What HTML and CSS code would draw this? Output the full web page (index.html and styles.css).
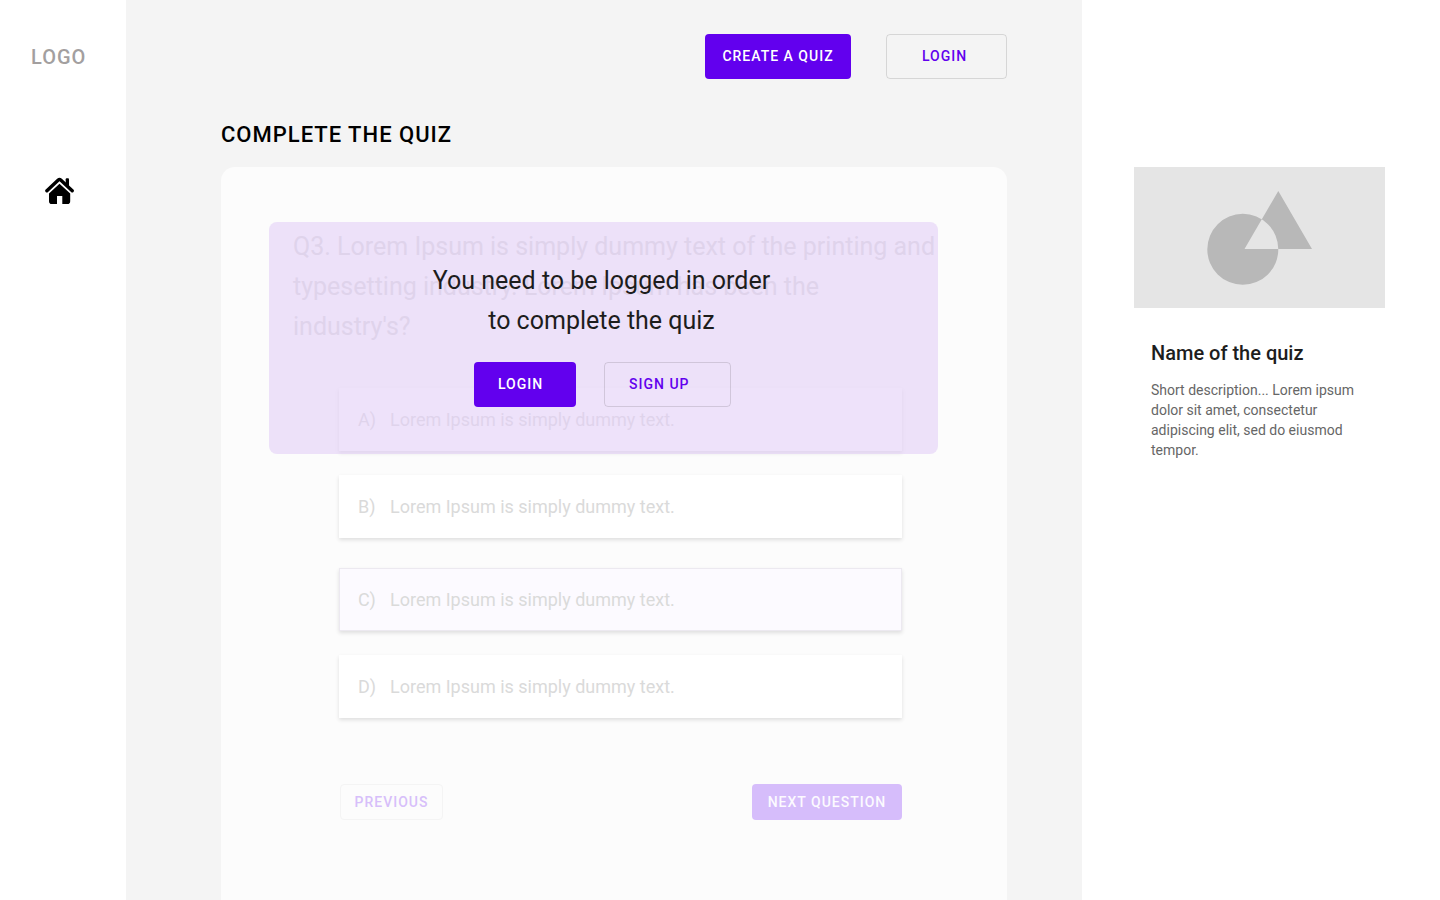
FILE: index.html
```html
<!DOCTYPE html>
<html lang="en">
<head>
<meta charset="utf-8">
<meta name="viewport" content="width=device-width, initial-scale=1">
<title>Complete the quiz</title>
<link rel="stylesheet" href="styles.css">
</head>
<body>
<div class="layout">
  <nav class="sidebar" aria-label="Main">
    <div class="logo">LOGO</div>
    <a class="home-link" href="#" aria-label="Home">
      <svg class="home-icon" viewBox="0 0 30 28" aria-hidden="true">
        <path d="M20.700 2.200Q20.700 1.200 21.700 1.200H23Q24 1.200 24 2.200V10L20.700 7Z"/>
        <path d="M1.900 13.800 13.300 3Q14.500 1.900 15.700 3L27.200 13.800" fill="none" stroke="#000" stroke-width="3.400" stroke-linecap="round"/>
        <path d="M14.500 6.800 25.200 16.600V24.200Q25.200 27 22.400 27H17.300V19H12V27H6.800Q4 27 4 24.200V16.600Z"/>
      </svg>
    </a>
  </nav>

  <main class="main">
    <header class="topbar">
      <button class="btn btn-filled btn-create" type="button">CREATE A QUIZ</button>
      <button class="btn btn-outline btn-login" type="button">LOGIN</button>
    </header>
    <h1 class="page-title">COMPLETE THE QUIZ</h1>

    <section class="card">
      <div class="quiz">
        <p class="question">Q3. Lorem Ipsum is simply dummy text of the printing and typesetting industry. Lorem Ipsum has been the industry's?</p>
        <div class="options">
          <button class="option" type="button"><span class="letter">A)</span><span>Lorem Ipsum is simply dummy text.</span></button>
          <button class="option" type="button"><span class="letter">B)</span><span>Lorem Ipsum is simply dummy text.</span></button>
          <button class="option option-selected" type="button" aria-pressed="true"><span class="letter">C)</span><span>Lorem Ipsum is simply dummy text.</span></button>
          <button class="option" type="button"><span class="letter">D)</span><span>Lorem Ipsum is simply dummy text.</span></button>
        </div>
        <div class="pager">
          <button class="btn btn-small btn-previous" type="button">PREVIOUS</button>
          <button class="btn btn-small btn-next" type="button">NEXT QUESTION</button>
        </div>
      </div>

      <div class="notice" role="dialog" aria-labelledby="notice-text">
        <p class="notice-text" id="notice-text">You need to be logged in order<br>to complete the quiz</p>
        <div class="notice-actions">
          <button class="btn btn-filled btn-notice-login" type="button">LOGIN</button>
          <button class="btn btn-outline btn-signup" type="button">SIGN UP</button>
        </div>
      </div>
    </section>
  </main>

  <aside class="details">
    <svg class="cover" viewBox="0 0 251 141" role="img" aria-label="Quiz cover">
      <rect width="251" height="141" fill="#e5e5e5"/>
      <path fill="#b8b8b8" fill-rule="evenodd" d="M73.300 82.300a35.500 35.500 0 1 0 71 0a35.500 35.500 0 1 0-71 0ZM144.300 24 178 82H110.500Z"/>
    </svg>
    <div class="details-body">
      <h2 class="details-title">Name of the quiz</h2>
      <p class="details-text">Short description... Lorem ipsum dolor sit amet, consectetur adipiscing elit, sed do eiusmod tempor.</p>
    </div>
  </aside>
</div>
</body>
</html>
```
FILE: styles.css
```css
* {
  box-sizing: border-box;
}

body {
  margin: 0;
  background: #fff;
  color: #000;
  font-family: Roboto, sans-serif;
}

h1,
h2,
p {
  margin: 0;
}

.layout {
  display: grid;
  grid-template-columns: 126px 1fr 358px;
  min-height: 100vh;
}

/* Sidebar */
.sidebar {
  padding: 45px 31px;
}

.logo {
  color: #a39f9f;
  font-size: 20px;
  font-weight: 500;
  letter-spacing: 1px;
  line-height: 24px;
}

.home-link {
  display: block;
  margin: 108px 0 0 14px;
}

.home-icon {
  display: block;
  width: 30px;
  height: 28px;
}

/* Main column */
.main {
  display: flex;
  flex-direction: column;
  padding: 34px 75px 0 95px;
  background: #f4f4f4;
}

.topbar {
  display: flex;
  justify-content: flex-end;
  gap: 35px;
}

.btn {
  height: 45px;
  padding: 0 0 2px;
  border: 1px solid transparent;
  border-radius: 4px;
  background: none;
  color: #6200ee;
  font: 500 14px/16px Roboto, sans-serif;
  letter-spacing: 1px;
  white-space: nowrap;
}

.btn-filled {
  background: #6200ee;
  color: #fff;
}

.btn-outline {
  border-color: rgba(0, 0, 0, 0.12);
}

.btn-create {
  width: 146px;
}

.btn-login {
  width: 121px;
  padding-left: 35px;
  text-align: left;
}

.page-title {
  margin-top: 42px;
  font-size: 22px;
  font-weight: 500;
  letter-spacing: 1px;
  line-height: 28px;
}

.card {
  position: relative;
  flex: 1;
  margin-top: 18px;
  border-radius: 14px 14px 0 0;
  background: #fcfcfc;
}

.question {
  padding: 60px 68px 0 72px;
  color: #d9d9d9;
  font-size: 25px;
  line-height: 40px;
}

.options {
  display: flex;
  flex-direction: column;
  gap: 24px;
  margin: 41px 105px 0 118px;
}

.option {
  display: flex;
  align-items: center;
  height: 63px;
  padding: 0 19px;
  border: 0;
  background: #fff;
  box-shadow: 0 2px 4px rgba(0, 0, 0, 0.12);
  color: #dadada;
  font: 400 18px/24px Roboto, sans-serif;
  text-align: left;
}

.option-selected {
  margin-top: 6px;
  padding: 0 18px;
  border: 1px solid #ece9f0;
  background: #fcfaff;
}

.letter {
  width: 32px;
}

.pager {
  display: flex;
  justify-content: space-between;
  margin: 66px 105px 0 119px;
  padding-bottom: 60px;
}

.btn-small {
  height: 36px;
  padding: 0;
}

.btn-previous {
  width: 103px;
  border-color: #f4f4f4;
  color: #d7bffa;
}

.btn-next {
  width: 150px;
  background: #d6bdfb;
  color: #fcfaff;
}

/* Login notice laid over the quiz */
.notice {
  position: absolute;
  top: 55px;
  left: 48px;
  right: 69px;
  height: 232px;
  padding-top: 39px;
  border-radius: 8px;
  background: rgba(227, 206, 247, 0.6);
}

.notice-text {
  padding-right: 4px;
  color: #1d1d1d;
  font-size: 25px;
  line-height: 40px;
  text-align: center;
}

.notice-actions {
  display: flex;
  justify-content: center;
  gap: 28px;
  margin-top: 21px;
  padding-right: 2px;
}

.btn-notice-login {
  width: 102px;
  padding-left: 23px;
  text-align: left;
}

.btn-signup {
  width: 127px;
  padding-left: 24px;
  text-align: left;
}

/* Quiz details */
.details {
  padding: 167px 55px 0 52px;
}

.cover {
  display: block;
  width: 100%;
}

.details-body {
  padding: 33px 12px 0 17px;
}

.details-title {
  color: #1d1d1d;
  font-size: 20px;
  font-weight: 500;
  line-height: 24px;
}

.details-text {
  margin-top: 15px;
  color: #666;
  font-size: 14px;
  line-height: 20px;
}
```
